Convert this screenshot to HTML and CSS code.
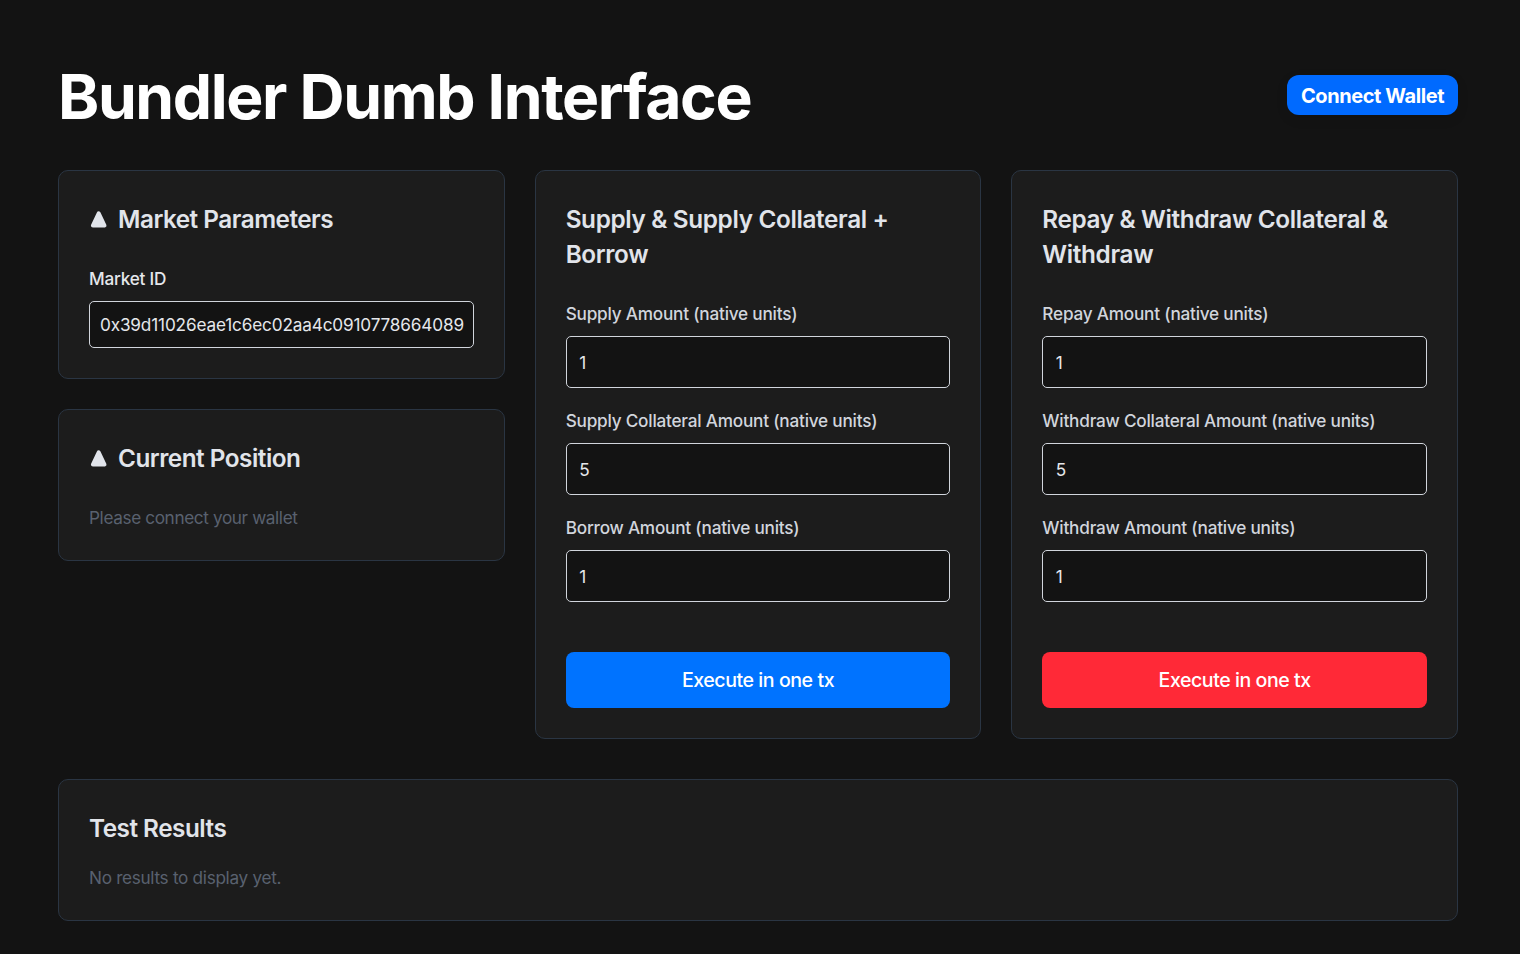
FILE: index.html
```html
<!DOCTYPE html>
<html lang="en">
<head>
<meta charset="utf-8">
<title>Bundler Dumb Interface</title>
<link rel="stylesheet" href="styles.css">
</head>
<body>
<main class="page">
  <header class="header">
    <h1 class="title">Bundler Dumb Interface</h1>
    <button class="connect">Connect Wallet</button>
  </header>
  <div class="columns">
    <div class="stack">
      <section class="card">
        <h2 class="heading with-icon"><svg class="tri" viewBox="0 0 19 19"><path d="M9.7 3.4 15.5 15.5H3.9Z"/></svg><span>Market Parameters</span></h2>
        <label class="label bright" for="market">Market ID</label>
        <input class="input market" id="market" value="0x39d11026eae1c6ec02aa4c0910778664089">
      </section>
      <section class="card">
        <h2 class="heading with-icon"><svg class="tri" viewBox="0 0 19 19"><path d="M9.7 3.4 15.5 15.5H3.9Z"/></svg><span>Current Position</span></h2>
        <p class="muted">Please connect your wallet</p>
      </section>
    </div>
    <section class="card">
      <h2 class="heading wide">Supply &amp; Supply Collateral +<br>Borrow</h2>
      <label class="label" for="s1">Supply Amount (native units)</label>
      <input class="input" id="s1" value="1">
      <label class="label" for="s2">Supply Collateral Amount (native units)</label>
      <input class="input" id="s2" value="5">
      <label class="label" for="s3">Borrow Amount (native units)</label>
      <input class="input" id="s3" value="1">
      <button class="execute blue">Execute in one tx</button>
    </section>
    <section class="card">
      <h2 class="heading wide">Repay &amp; Withdraw Collateral &amp;<br>Withdraw</h2>
      <label class="label" for="r1">Repay Amount (native units)</label>
      <input class="input" id="r1" value="1">
      <label class="label" for="r2">Withdraw Collateral Amount (native units)</label>
      <input class="input" id="r2" value="5">
      <label class="label" for="r3">Withdraw Amount (native units)</label>
      <input class="input" id="r3" value="1">
      <button class="execute red">Execute in one tx</button>
    </section>
  </div>
  <section class="card results">
    <h2 class="heading">Test Results</h2>
    <p class="muted">No results to display yet.</p>
  </section>
</main>
</body>
</html>
```
FILE: styles.css
```css
* { box-sizing: border-box; }
body { margin: 0; background: #131313; color: #e5e7eb; font-family: Inter, "Liberation Sans", sans-serif; }
h1, h2, p { margin: 0; }
button, input { font-family: inherit; }
.page { padding: 58px 62px 33px 58px; }
.header { display: flex; justify-content: space-between; align-items: center; height: 77px; margin-bottom: 35px; }
.title { color: #fff; font-size: 62.4px; line-height: 77px; font-weight: 700; letter-spacing: -1.38px; white-space: nowrap; }
.connect { width: 171px; height: 40px; margin-bottom: 3px; padding: 2px 0 0; border: 0; border-radius: 12px; background: #006aff; color: #fff; font-size: 20px; font-weight: 700; letter-spacing: -0.42px; white-space: nowrap; box-shadow: 0 4px 12px rgba(0, 0, 0, 0.1); }
.columns { display: grid; grid-template-columns: repeat(3, minmax(0, 1fr)); gap: 30px; align-items: start; }
.stack { display: grid; gap: 30px; }
.card { padding: 30px; border: 1px solid #2a3543; border-radius: 10px; background: #1c1c1c; }
.heading { margin-bottom: 29px; padding-top: 1px; color: #e1e4ea; font-size: 24.3px; line-height: 35px; font-weight: 600; letter-spacing: -0.49px; white-space: nowrap; }
.wide { letter-spacing: -0.34px; }
.with-icon { display: flex; align-items: center; gap: 10px; }
.tri { width: 19px; height: 19px; fill: #e1e4ea; stroke: #e1e4ea; stroke-width: 4; stroke-linejoin: round; }
.label { display: block; height: 25px; margin-bottom: 10px; color: #d1d5dc; font-size: 17.2px; line-height: 25px; font-weight: 500; letter-spacing: -0.22px; white-space: nowrap; }
.bright { color: #e5e7eb; }
.input { display: block; width: 100%; height: 52px; margin-bottom: 20px; padding: 0 13px 0 12.5px; border: 1px solid #d1d5dc; border-radius: 5px; background: #131313; color: #e5e7eb; font-size: 17.2px; outline: 0; }
.market { height: 47px; margin: 0; padding: 0 9px 1px 10px; letter-spacing: -0.16px; }
.muted { color: #59616f; font-size: 17.2px; line-height: 25px; letter-spacing: -0.38px; }
.execute { display: block; width: 100%; height: 56px; margin-top: 50px; border: 0; border-radius: 8px; color: #fff; font-size: 19.6px; font-weight: 500; letter-spacing: -0.46px; }
.blue { background: #0073ff; }
.red { background: #ff2937; }
.results { margin-top: 40px; }
.results .heading { margin-bottom: 19px; }
.results .muted { letter-spacing: -0.31px; }
```
